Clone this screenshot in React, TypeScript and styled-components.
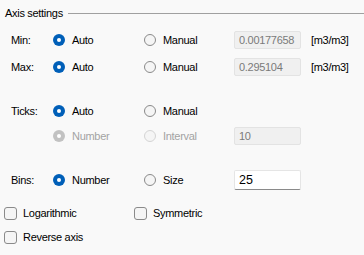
import React from "react";
import styled, { createGlobalStyle } from "styled-components";

const Global = createGlobalStyle`
  html, body { margin: 0; padding: 0; background: #f9f9f9; }
  body {
    font-family: "Liberation Sans", Arial, sans-serif;
    font-size: 11px;
    letter-spacing: -0.3px;
    color: #000;
  }
`;

const Panel = styled.div`
  width: 364px;
  height: 255px;
  background: #f9f9f9;
  box-sizing: border-box;
  display: flex;
  flex-direction: column;
`;

const Header = styled.div`
  height: 26px;
  display: flex;
  align-items: center;
  padding-left: 5px;
  gap: 5px;
`;

const Title = styled.span`
  white-space: nowrap;
`;

const Rule = styled.div`
  flex: 1;
  height: 1px;
  background: #a0a0a0;
  margin-top: 1px;
`;

const Row = styled.div<{ $top: number }>`
  display: grid;
  grid-template-columns: 53px 91px 90px 67px 1fr;
  align-items: center;
  height: 24px;
  margin-top: ${(p) => p.$top}px;
`;

const Label = styled.span`
  padding-left: 11px;
`;

const Option = styled.label<{ $disabled?: boolean }>`
  display: flex;
  align-items: center;
  gap: 7px;
  color: ${(p) => (p.$disabled ? "#a3a3a3" : "#000")};
  white-space: nowrap;
`;

const RadioDot = styled.span<{ $checked?: boolean; $disabled?: boolean }>`
  width: 12px;
  height: 12px;
  border-radius: 50%;
  box-sizing: border-box;
  flex: none;
  position: relative;
  ${(p) =>
    p.$checked
      ? `background: ${p.$disabled ? "#c2c2c2" : "#005fb8"};`
      : `background: #f5f5f5; border: 1px solid ${p.$disabled ? "#d4d4d4" : "#8a8a8a"};`}
  &::after {
    content: "";
    display: ${(p) => (p.$checked ? "block" : "none")};
    position: absolute;
    left: 4px;
    top: 4px;
    width: 4px;
    height: 4px;
    border-radius: 50%;
    background: #fff;
  }
`;

const Field = styled.div<{ $disabled?: boolean }>`
  height: 18px;
  box-sizing: border-box;
  display: flex;
  align-items: center;
  padding-left: 4px;
  border-radius: 2px;
  ${(p) =>
    p.$disabled
      ? `background: #f0f0f0; border: 1px solid #e3e3e3; color: #7a7a7a;`
      : `background: #fff; border: 1px solid #e5e5e5; border-bottom: 1px solid #8a8a8a; color: #000; height: 20px; font-size: 12.5px; letter-spacing: 0;`}
`;

const Unit = styled.span`
  padding-left: 10px;
  white-space: nowrap;
`;

const CheckRow = styled.div<{ $top: number }>`
  display: grid;
  grid-template-columns: 130px 1fr;
  align-items: center;
  height: 24px;
  margin-top: ${(p) => p.$top}px;
  padding-left: 4px;
`;

const Check = styled.label`
  display: flex;
  align-items: center;
  gap: 6px;
  white-space: nowrap;
`;

const Box = styled.span`
  width: 13px;
  height: 13px;
  box-sizing: border-box;
  border: 1px solid #8a8a8a;
  border-radius: 3px;
  background: #f5f5f5;
  flex: none;
`;

const Radio = ({ label, checked, disabled }: { label: string; checked?: boolean; disabled?: boolean }) => (
  <Option $disabled={disabled}>
    <RadioDot $checked={checked} $disabled={disabled} />
    {label}
  </Option>
);

export default function App() {
  return (
    <>
      <Global />
      <Panel>
        <Header>
          <Title>Axis settings</Title>
          <Rule />
        </Header>
        <Row $top={2}>
          <Label>Min:</Label>
          <Radio label="Auto" checked />
          <Radio label="Manual" />
          <Field $disabled>0.00177658</Field>
          <Unit>[m3/m3]</Unit>
        </Row>
        <Row $top={3}>
          <Label>Max:</Label>
          <Radio label="Auto" checked />
          <Radio label="Manual" />
          <Field $disabled>0.295104</Field>
          <Unit>[m3/m3]</Unit>
        </Row>
        <Row $top={20}>
          <Label>Ticks:</Label>
          <Radio label="Auto" checked />
          <Radio label="Manual" />
          <span />
          <span />
        </Row>
        <Row $top={1}>
          <span />
          <Radio label="Number" checked disabled />
          <Radio label="Interval" disabled />
          <Field $disabled>10</Field>
          <span />
        </Row>
        <Row $top={20}>
          <Label>Bins:</Label>
          <Radio label="Number" checked />
          <Radio label="Size" />
          <Field>25</Field>
          <span />
        </Row>
        <CheckRow $top={9}>
          <Check>
            <Box />
            Logarithmic
          </Check>
          <Check>
            <Box />
            Symmetric
          </Check>
        </CheckRow>
        <CheckRow $top={0}>
          <Check>
            <Box />
            Reverse axis
          </Check>
        </CheckRow>
      </Panel>
    </>
  );
}
